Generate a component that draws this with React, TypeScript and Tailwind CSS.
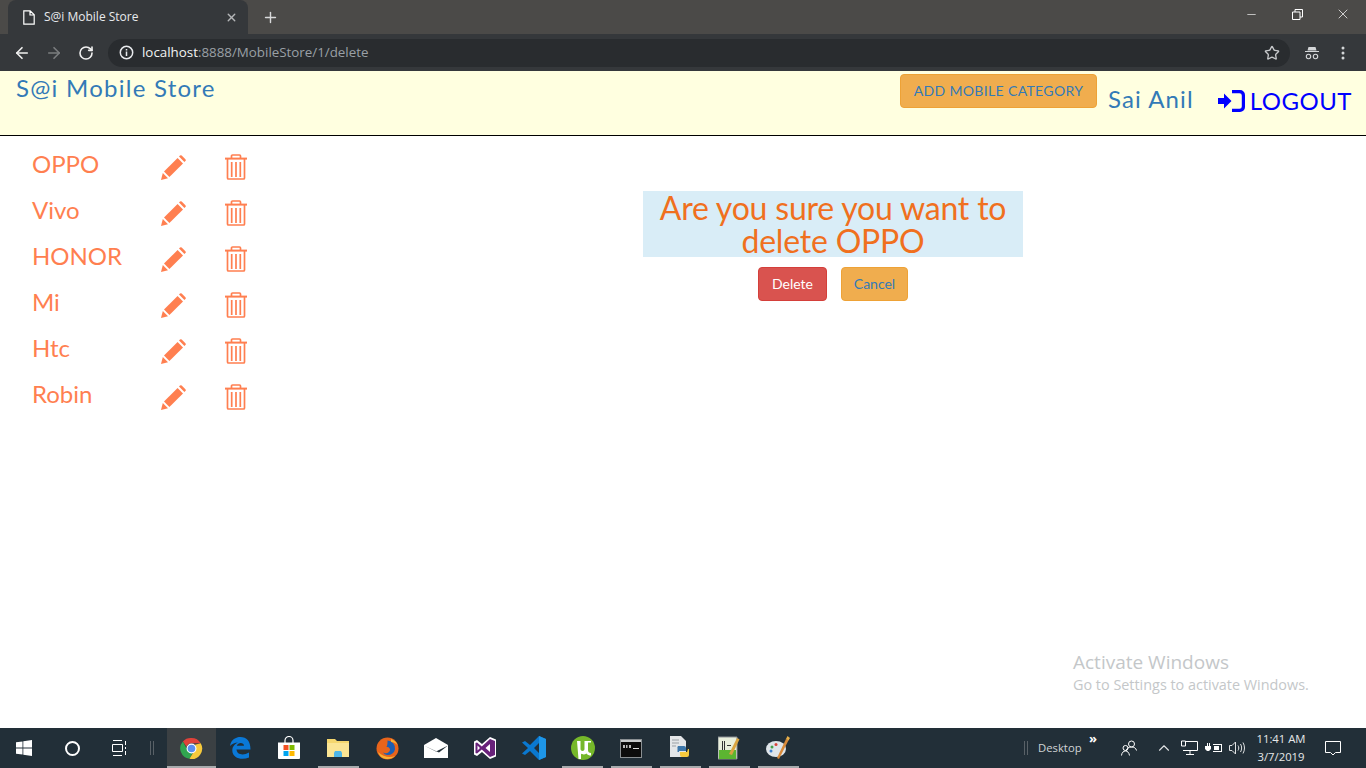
import { ArrowLeft, ArrowRight, ChevronUp, Minus, Plus, RotateCw, Star, X } from "lucide-react";
import type { ReactNode } from "react";

const brands = ["OPPO", "Vivo", "HONOR", "Mi", "Htc", "Robin"];

function PencilIcon() {
  return (
    <svg width="26" height="26" viewBox="0 0 26 26" className="text-[#ff7f50]" fill="currentColor">
      <path d="M1 25l1.800-7 5.200 5.200z" />
      <path d="M4 16.600L17.600 3l5.400 5.400L9.400 22z" />
      <path d="M19 1.600l1-1a1.200 1.200 0 0 1 1.700 0l3.700 3.700a1.200 1.200 0 0 1 0 1.700l-1 1z" />
    </svg>
  );
}

function TrashIcon() {
  return (
    <svg width="22" height="26" viewBox="0 0 22 26" fill="none" stroke="#ff7f50" strokeWidth="1.700">
      <path d="M0 4.600h22" strokeWidth="2" />
      <path d="M6.500 4V2a1 1 0 0 1 1-1h7a1 1 0 0 1 1 1v2" />
      <path d="M2.500 5v19a1 1 0 0 0 1 1h15a1 1 0 0 0 1-1V5" />
      <path d="M6.700 8v15M11 8v15M15.300 8v15" />
    </svg>
  );
}

function BrandRow({ name }: { name: string }) {
  return (
    <div className="flex h-[46px] items-start">
      <span className="w-[128px] pt-[2px] text-[24px] leading-[34px] text-[#ff7f50]">{name}</span>
      <span className="w-[65px] pt-[10px]"><PencilIcon /></span>
      <span className="pt-[9px]"><TrashIcon /></span>
    </div>
  );
}

function ChromeIcon() {
  return (
    <svg width="23" height="23" viewBox="0 0 24 24">
      <path d="M12 1a11 11 0 0 1 9.600 5.500H12a5.500 5.500 0 0 0-5.200 3.600L3 4.600A11 11 0 0 1 12 1z" fill="#e0423a" />
      <path d="M3 4.600l4.700 8.600a5.500 5.500 0 0 0 5.600 3.200L9.900 22.800A11 11 0 0 1 3 4.600z" fill="#31a550" />
      <path d="M21.600 6.500A11 11 0 0 1 9.900 22.800l4.600-7.600A5.500 5.500 0 0 0 15.500 8z" fill="#f7ca3c" />
      <circle cx="12" cy="12" r="5.200" fill="#fff" />
      <circle cx="12" cy="12" r="4" fill="#5a8ff0" />
    </svg>
  );
}

function EdgeIcon() {
  return (
    <svg width="22" height="24" viewBox="0 0 22 24" fill="#0a78d7">
      <path d="M1 10C2 3.500 7 1 11.500 1 17.500 1 21.500 5 21.500 13.500H7.500C7.800 18.500 14 20 20 16.500V21.500C13 24.500 3.500 22.500 3.300 14.500 3.200 10.500 6 7.800 9 6.500 6 6.500 3 8 1 10zM7.800 9.800H15C15 6.300 9 6 7.800 9.800z" />
    </svg>
  );
}

function StoreIcon() {
  return (
    <svg width="24" height="24" viewBox="0 0 24 24">
      <path d="M8 7V4.500a4 4 0 0 1 8 0V7" fill="none" stroke="#fff" strokeWidth="1.200" />
      <path d="M1 6.500h22V22a1 1 0 0 1-1 1H2a1 1 0 0 1-1-1z" fill="#fff" />
      <rect x="6.500" y="9" width="5" height="5" fill="#f25022" />
      <rect x="12.500" y="9" width="5" height="5" fill="#7fba00" />
      <rect x="6.500" y="15" width="5" height="5" fill="#00a4ef" />
      <rect x="12.500" y="15" width="5" height="5" fill="#ffb900" />
    </svg>
  );
}

function FolderIcon() {
  return (
    <svg width="22" height="20" viewBox="0 0 22 20">
      <path d="M0 1h8l2 2h12v16H0z" fill="#f5d76e" />
      <path d="M0 5h22v14H0z" fill="#fbe594" />
      <path d="M7 19v-4l1-2h6l1 2v4z" fill="#4fb6e8" />
    </svg>
  );
}

function FirefoxIcon() {
  return (
    <svg width="23" height="23" viewBox="0 0 23 23">
      <circle cx="11.500" cy="11.500" r="11" fill="#e8641b" />
      <path d="M11.500 3.500a8 8 0 0 1 7.500 9 7 7 0 0 1-8 5.500 6 6 0 0 1-4-2.500c3 1.500 6.500.5 7-2.500.3-2-1.500-3.500-3.500-3 1-2 1-4 1-6.500z" fill="#1d5fb3" />
      <path d="M15 2c3 1 5.500 3 6.500 6-2-2-4-3-6.500-3z" fill="#f9b233" />
      <path d="M2 15c1.500 4.500 5 7 9.500 7 3 0 5.500-1 7.500-3-5 2-12 1-17-4z" fill="#f9b233" />
    </svg>
  );
}

function MailIcon() {
  return (
    <svg width="24" height="20" viewBox="0 0 24 20">
      <path d="M0 7L12 0l12 7v13H0z" fill="#fff" />
      <path d="M0 7.500l12 6 12-6-9 7z" fill="#222f38" />
    </svg>
  );
}

function VisualStudioIcon() {
  return (
    <svg width="24" height="24" viewBox="0 0 24 24">
      <path d="M17 1l6 2.500v17L17 23l-8-7-5 4-3-1.500v-13L4 4l5 4z" fill="#fff" />
      <path d="M17 3l5 2v14l-5 2-8.200-7.500L4 17.500 2.500 17V7L4 6.500 8.800 10.500zM17 8l-4.500 4 4.500 4zM4.500 9.500v5L7 12z" fill="#68217a" />
    </svg>
  );
}

function VsCodeIcon() {
  return (
    <svg width="24" height="24" viewBox="0 0 24 24">
      <path d="M17 0l7 3v18l-7 3-9-9-5 4-3-1.500 6-5.500L0 6.500 3 5l5 4zM17 7l-5 5 5 5z" fill="#0a78d0" />
      <path d="M17 0l7 3v18l-7 3V17z" fill="#1e96e8" />
    </svg>
  );
}

function TorrentIcon() {
  return (
    <svg width="24" height="24" viewBox="0 0 24 24">
      <circle cx="12" cy="12" r="12" fill="#76b82a" />
      <path d="M6 5h3.500v8c0 2.500 4 2.500 4 0V5H20v1.500h-3V14c0 2 1 3 3 3v2.500c-2 0-3.500-.5-4.500-2-2 1.500-4.500 1-5.500 0V23H7.500z" fill="#fff" />
    </svg>
  );
}

function CmdIcon() {
  return (
    <svg width="22" height="19" viewBox="0 0 22 19">
      <rect x=".5" y=".5" width="21" height="18" fill="#0c0c0c" stroke="#8a8f92" />
      <path d="M1 1h20v2H1z" fill="#c8cbcc" />
      <path d="M3 6h2v3H3zM6 6h1.500v3H6zM9 6h2v3H9z" fill="#bbb" />
      <path d="M13 9h6v1h-6z" fill="#ddd" />
    </svg>
  );
}

function PythonIcon() {
  return (
    <svg width="24" height="24" viewBox="0 0 24 24">
      <path d="M2 0h11l5 5v16H2z" fill="#e4e6e8" />
      <path d="M4 4h7M4 7h7M4 10h4" stroke="#9aa0a5" />
      <path d="M10 10h6a2 2 0 0 1 2 2v3h-7v1h-1.500v-3.500A2.500 2.500 0 0 1 10 10z" fill="#3d77aa" />
      <path d="M21 13v6a2 2 0 0 1-2 2h-5a2 2 0 0 1-2-2v-3h7l1-3z" fill="#f6c93e" />
    </svg>
  );
}

function NotepadIcon() {
  return (
    <svg width="22" height="24" viewBox="0 0 22 24">
      <path d="M0 1h19v22H0z" fill="#e9efdc" stroke="#8a8f92" />
      <path d="M1 14h17v9H1z" fill="#5cb531" />
      <path d="M4 5h1v9H4zM6 5h1v9H6z" fill="#333" />
      <path d="M9 9h4v1H9z" fill="#333" />
      <path d="M11 18L19 2l2.500 1.300L14 19z" fill="#d9a441" />
    </svg>
  );
}

function PaintIcon() {
  return (
    <svg width="24" height="24" viewBox="0 0 24 24">
      <ellipse cx="10" cy="13" rx="10" ry="8" fill="#dfe5ea" />
      <circle cx="6" cy="11" r="1.500" fill="#46a04a" />
      <circle cx="10" cy="8.500" r="1.500" fill="#d9453a" />
      <circle cx="5" cy="15" r="1.500" fill="#3d7fd0" />
      <path d="M11 22L20 3l2.500 1.200L13 23z" fill="#d98a3a" />
      <path d="M20 3l1.500-3 2.500 2-1.500 2.500z" fill="#e8b04a" />
    </svg>
  );
}

function TaskbarSlot({ children, running, active }: { children: ReactNode; running?: boolean; active?: boolean }) {
  return (
    <div className={`relative flex h-full w-[48.900px] shrink-0 items-center justify-center ${active ? "bg-[#3b4043]" : ""}`}>
      {children}
      {running && <span className={`absolute bottom-0 h-[2px] bg-[#a8abad] ${active ? "inset-x-0" : "inset-x-[4px]"}`} />}
    </div>
  );
}

export default function App() {
  return (
    <div className="flex h-screen w-full flex-col overflow-hidden bg-white font-['Lato',sans-serif]">
      {/* browser tab strip */}
      <div className="flex h-[34px] shrink-0 bg-[#4b4a48] font-['Open_Sans',sans-serif]">
        <div className="ml-[8px] flex h-[34px] w-[240px] items-center rounded-t-[8px] bg-[#35383b] pl-[15px] pr-[10px] text-white">
          <svg width="12" height="15" viewBox="0 0 12 15" fill="none" stroke="#fff" strokeWidth="1.200">
            <path d="M.8.8h6.400l4 4v9.400H.8zM7 .8v4.200h4.200" />
          </svg>
          <span className="ml-[9px] flex-1 text-[12px] text-[#e8eaed]">S@i Mobile Store</span>
          <X size={13} color="#b4b6b8" strokeWidth={2.500} />
        </div>
        <div className="ml-[14px] flex items-center">
          <Plus size={17} color="#d8d9da" strokeWidth={2} />
        </div>
        <div className="ml-auto flex items-start text-white">
          <div className="flex h-[28px] w-[46px] items-center justify-center"><Minus size={13} strokeWidth={1.200} /></div>
          <div className="flex h-[28px] w-[46px] items-center justify-center">
            <svg width="11" height="11" viewBox="0 0 11 11" fill="none" stroke="#fff">
              <path d="M.5 3h7.500v7.500H.5zM3 3V.5h7.500V8H8" />
            </svg>
          </div>
          <div className="flex h-[28px] w-[46px] items-center justify-center"><X size={16} strokeWidth={1.100} /></div>
        </div>
      </div>

      {/* browser toolbar */}
      <div className="flex h-[37px] shrink-0 items-center bg-[#35383b] font-['Open_Sans',sans-serif]">
        <ArrowLeft size={18} color="#f1f1f1" strokeWidth={2.200} className="ml-[13px]" />
        <ArrowRight size={18} color="#7b7d7f" strokeWidth={2.200} className="ml-[14px]" />
        <RotateCw size={16} color="#f1f1f1" strokeWidth={2.400} className="ml-[15px]" />
        <div className="ml-[14px] flex h-[28px] w-[1182px] items-center rounded-full bg-[#292c2f] pl-[11px]">
          <svg width="15" height="15" viewBox="0 0 15 15" fill="none" stroke="#e8eaed" strokeWidth="1.500">
            <circle cx="7.500" cy="7.500" r="6.200" />
            <path d="M7.500 6.500v4.500M7.500 4v1.500" />
          </svg>
          <span className="ml-[8px] text-[13.350px] text-[#f1f3f4]">localhost</span>
          <span className="text-[13.350px] text-[#9aa0a6]">:8888/MobileStore/1/delete</span>
          <Star size={16} color="#c7c9cb" strokeWidth={2} className="ml-auto mr-[10px]" />
        </div>
        <svg width="14" height="14" viewBox="0 0 14 14" fill="#d4d6d8" className="ml-[15px]">
          <path d="M3.500 1h7l1 3.500h-9zM0 5h14v1H0z" />
          <circle cx="3.500" cy="10.500" r="2.200" fill="none" stroke="#d4d6d8" strokeWidth="1.100" />
          <circle cx="10.500" cy="10.500" r="2.200" fill="none" stroke="#d4d6d8" strokeWidth="1.100" />
        </svg>
        <svg width="4" height="14" viewBox="0 0 4 14" fill="#d4d6d8" className="ml-[22px]">
          <circle cx="2" cy="2" r="1.500" />
          <circle cx="2" cy="7" r="1.500" />
          <circle cx="2" cy="12" r="1.500" />
        </svg>
      </div>

      {/* app header */}
      <header className="flex h-[65px] shrink-0 items-start border-b border-black bg-[#ffffe0]">
        <h1 className="ml-[16px] text-[24px] leading-[34px] tracking-[1.250px] text-[#337ab7]">S@i Mobile Store</h1>
        <div className="ml-auto flex items-start">
          <button className="mt-[3px] h-[34px] w-[197px] rounded-[4px] border border-[#eea236] bg-[#f0ad4e] pb-[2px] text-[14px] tracking-[.35px] text-[#337ab7]">
            ADD MOBILE CATEGORY
          </button>
          <span className="ml-[11px] mt-[11px] text-[24px] leading-[34px] tracking-[1.100px] text-[#337ab7]">Sai Anil</span>
          <span className="ml-[24px] mr-[14px] mt-[14px] flex items-center text-[24px] leading-[32px] tracking-[.5px] text-[#0000ff]">
            <svg width="27" height="22" viewBox="0 0 27 22" fill="#0000ff" className="mr-[5px]">
              <path d="M0 8h6V3.500L13.500 11 6 18.500V14H0z" />
              <path d="M14 0h8a5 5 0 0 1 5 5v12a5 5 0 0 1-5 5h-8v-3.200h7.500a2.300 2.300 0 0 0 2.300-2.300v-11a2.300 2.300 0 0 0-2.300-2.300H14z" />
            </svg>
            LOGOUT
          </span>
        </div>
      </header>

      {/* page body */}
      <main className="relative flex min-h-0 flex-1">
        <aside className="ml-[32px] mt-[9px] w-[260px] shrink-0">
          {brands.map((name) => (
            <BrandRow key={name} name={name} />
          ))}
        </aside>
        <section className="ml-[351px] mt-[55px] flex w-[380px] flex-col items-center">
          <h2 className="w-full bg-[#d9edf7] px-[10px] text-center text-[32px] leading-[33px] tracking-[-.2px] text-[#f0701e]">
            Are you sure you want to delete OPPO
          </h2>
          <div className="mt-[10px] flex gap-[14px]">
            <button className="h-[34px] w-[69px] rounded-[4px] border border-[#d43f3a] bg-[#d9534f] pb-[1px] text-[14px] text-white">Delete</button>
            <button className="h-[34px] w-[67px] rounded-[4px] border border-[#eea236] bg-[#f0ad4e] pb-[1px] text-[14px] text-[#337ab7]">Cancel</button>
          </div>
        </section>
        <div className="absolute left-[1073px] top-[513px] font-['Open_Sans',sans-serif] text-[#c4c7c9]">
          <p className="text-[19px] leading-[26px]">Activate Windows</p>
          <p className="text-[14.400px] leading-[20px]">Go to Settings to activate Windows.</p>
        </div>
      </main>

      {/* windows taskbar */}
      <footer className="flex h-[40px] shrink-0 items-center bg-[#222f38] font-['Open_Sans',sans-serif] text-white">
        <div className="flex h-full w-[48px] items-center justify-center">
          <svg width="16" height="16" viewBox="0 0 16 16" fill="#fff">
            <path d="M0 2.300l6.500-.9v6.200H0zM7.300 1.300L16 0v7.600H7.300zM0 8.400h6.500v6.200L0 13.700zM7.300 8.400H16V16l-8.700-1.300z" />
          </svg>
        </div>
        <div className="flex h-full w-[48px] items-center justify-center">
          <span className="h-[15px] w-[15px] rounded-full border-2 border-white" />
        </div>
        <div className="flex h-full w-[48px] items-center justify-center">
          <svg width="17" height="16" viewBox="0 0 17 16" fill="none" stroke="#fff">
            <path d="M.5 4.500h10v7H.5zM1 .5h9M1 15.500h9M13.500 1v4M13.500 7v2M13.500 11v4" />
          </svg>
        </div>
        <div className="ml-[6px] mr-[13px] flex h-[14px] gap-[2px]">
          <span className="w-px bg-[#596167]" />
          <span className="w-px bg-[#596167]" />
        </div>
        <TaskbarSlot running active><ChromeIcon /></TaskbarSlot>
        <TaskbarSlot><EdgeIcon /></TaskbarSlot>
        <TaskbarSlot><StoreIcon /></TaskbarSlot>
        <TaskbarSlot running><FolderIcon /></TaskbarSlot>
        <TaskbarSlot><FirefoxIcon /></TaskbarSlot>
        <TaskbarSlot><MailIcon /></TaskbarSlot>
        <TaskbarSlot><VisualStudioIcon /></TaskbarSlot>
        <TaskbarSlot><VsCodeIcon /></TaskbarSlot>
        <TaskbarSlot running><TorrentIcon /></TaskbarSlot>
        <TaskbarSlot running><CmdIcon /></TaskbarSlot>
        <TaskbarSlot running><PythonIcon /></TaskbarSlot>
        <TaskbarSlot running><NotepadIcon /></TaskbarSlot>
        <TaskbarSlot running><PaintIcon /></TaskbarSlot>

        <div className="ml-auto flex h-full items-center">
          <div className="mr-[10px] flex h-[14px] gap-[2px]">
            <span className="w-px bg-[#596167]" />
            <span className="w-px bg-[#596167]" />
          </div>
          <span className="w-[43px] text-[11.300px] text-[#d0d3d5]">Desktop</span>
          <span className="mb-[20px] ml-[8px] w-[8px] text-[13px] font-bold leading-none">»</span>
          <svg width="16" height="16" viewBox="0 0 16 16" fill="none" stroke="#fff" className="ml-[24px]">
            <circle cx="10.500" cy="4" r="3" />
            <path d="M5 11c.5-3 3-4 5.500-4s4.500 1 5 3.500" />
            <circle cx="4.500" cy="8" r="2.500" />
            <path d="M.5 15.500c.3-3 2-4.500 4-4.500s3.500 1.500 4 4.500" />
          </svg>
          <ChevronUp size={18} color="#e0e2e3" strokeWidth={1.500} className="ml-[18px]" />
          <svg width="17" height="16" viewBox="0 0 17 16" fill="none" stroke="#fff" className="ml-[8px]">
            <path d="M4 1.500h12.500v9H2M9 10.500v4M5 14.500h8M.5 1h4v5h-4z" />
          </svg>
          <svg width="17" height="12" viewBox="0 0 17 12" className="ml-[7px]" fill="#fff">
            <path d="M0 4h2V1h1v3h1V1h1v3h1v3L4 9H2L0 7zM8 2h9v8H8v-1h8V3H8zM9 4h5v4H9z" />
          </svg>
          <svg width="16" height="14" viewBox="0 0 16 14" fill="none" stroke="#e0e2e3" className="ml-[7px]">
            <path d="M.5 4.500h2.500l3.500-3.500v12l-3.500-3.500H.5zM9 4.500c1 1.500 1 3.500 0 5M11.500 3c1.500 2.500 1.500 5.500 0 8M14 1.500c2 3.500 2 7.500 0 11" />
          </svg>
          <div className="ml-[7px] w-[58px] text-center text-[11.300px] leading-[18px] text-[#e6e8e9]">
            <div>11:41 AM</div>
            <div>3/7/2019</div>
          </div>
          <div className="ml-[15px] mr-[25px]">
            <svg width="16" height="15" viewBox="0 0 16 15" fill="none" stroke="#fff">
              <path d="M.5.500h15v11h-5l-2.500 2.500-2.500-2.500h-5z" />
            </svg>
          </div>
        </div>
      </footer>
    </div>
  );
}
